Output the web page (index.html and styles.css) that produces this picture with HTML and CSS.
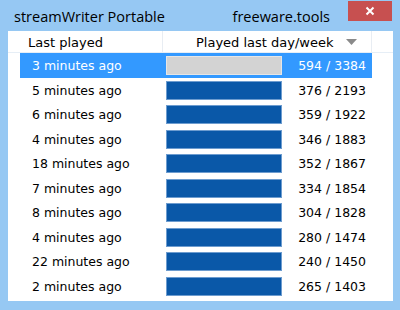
FILE: index.html
```html
<!DOCTYPE html>
<html>
<head>
<meta charset="utf-8">
<link rel="stylesheet" href="styles.css">
</head>
<body>
<div class="window">
  <div class="titlebar">
    <span class="title">streamWriter Portable</span>
    <span class="brand">freeware.tools</span>
    <span class="close">
      <svg width="10" height="10" viewBox="0 0 10 10"><path d="M1.5 1.5 L8.5 8.5 M8.5 1.5 L1.5 8.5" stroke="#fff" stroke-width="2"/></svg>
    </span>
  </div>
  <div class="client">
    <div class="header">
      <div class="hcol hcol1">Last played</div>
      <div class="hcol hcol2">Played last day/week
        <svg class="sort" width="11" height="6" viewBox="0 0 11 6"><path d="M0 0 H11 L5.5 6 Z" fill="#8a8a8a"/></svg>
      </div>
      <div class="hcol hcol3"></div>
    </div>
    <div class="list">
      <div class="row sel"><span class="when">3 minutes ago</span><span class="bar gray"></span><span class="num">594 / 3384</span></div>
      <div class="row"><span class="when">5 minutes ago</span><span class="bar"></span><span class="num">376 / 2193</span></div>
      <div class="row"><span class="when">6 minutes ago</span><span class="bar"></span><span class="num">359 / 1922</span></div>
      <div class="row"><span class="when">4 minutes ago</span><span class="bar"></span><span class="num">346 / 1883</span></div>
      <div class="row"><span class="when">18 minutes ago</span><span class="bar"></span><span class="num">352 / 1867</span></div>
      <div class="row"><span class="when">7 minutes ago</span><span class="bar"></span><span class="num">334 / 1854</span></div>
      <div class="row"><span class="when">8 minutes ago</span><span class="bar"></span><span class="num">304 / 1828</span></div>
      <div class="row"><span class="when">4 minutes ago</span><span class="bar"></span><span class="num">280 / 1474</span></div>
      <div class="row"><span class="when">22 minutes ago</span><span class="bar"></span><span class="num">240 / 1450</span></div>
      <div class="row"><span class="when">2 minutes ago</span><span class="bar"></span><span class="num">265 / 1403</span></div>
    </div>
  </div>
</div>
</body>
</html>
```
FILE: styles.css
```css
html, body {
  margin: 0;
  padding: 0;
  background: #ffffff;
}
.window {
  width: 400px;
  height: 310px;
  background: #96c8f3;
  display: flex;
  flex-direction: column;
  box-sizing: border-box;
}
.titlebar {
  height: 31px;
  display: flex;
  align-items: center;
  position: relative;
  font-family: "Open Sans", "Noto Sans", sans-serif;
  font-size: 14.5px;
  color: #000;
}
.title {
  margin-left: 14px;
  margin-top: 1px;
}
.brand {
  margin-left: auto;
  margin-right: 70px;
  margin-top: 1px;
}
.close {
  position: absolute;
  left: 348px;
  top: 1px;
  width: 44px;
  height: 20px;
  background: #c75050;
  display: flex;
  align-items: center;
  justify-content: center;
}
.client {
  background: #ffffff;
  margin: 0 7px 9px 8px;
  flex: 1;
  font-family: "DejaVu Sans", sans-serif;
  font-size: 12.5px;
  color: #000;
}
.header {
  height: 22px;
  display: flex;
  border-bottom: 1px solid #e6eef6;
  box-sizing: border-box;
}
.hcol {
  display: flex;
  align-items: center;
  font-size: 13px;
  height: 100%;
  box-sizing: border-box;
  padding-top: 1px;
}
.hcol1 {
  width: 155px;
  padding-left: 20px;
  border-right: 1px solid #e8edf3;
}
.hcol2 {
  width: 209px;
  padding-left: 33px;
  border-right: 1px solid #e8edf3;
}
.sort {
  margin-left: auto;
  margin-right: 14px;
}
.hcol3 {
  flex: 1;
}
.list {
  padding-left: 12px;
}
.row {
  width: 352px;
  height: 24.5px;
  display: flex;
  align-items: center;
  box-sizing: border-box;
  padding-top: 1px;
}
.row.sel {
  background: #3399ff;
  color: #ffffff;
}
.when {
  width: 146px;
  padding-left: 12px;
  box-sizing: border-box;
}
.bar {
  width: 116px;
  height: 19px;
  background: #0a58a8;
  border: 1px solid #6d9ccf;
  box-sizing: border-box;
}
.bar.gray {
  background: #d3d3d3;
  border-color: #e6e6e6;
}
.num {
  flex: 1;
  text-align: right;
  padding-right: 6px;
}
```
